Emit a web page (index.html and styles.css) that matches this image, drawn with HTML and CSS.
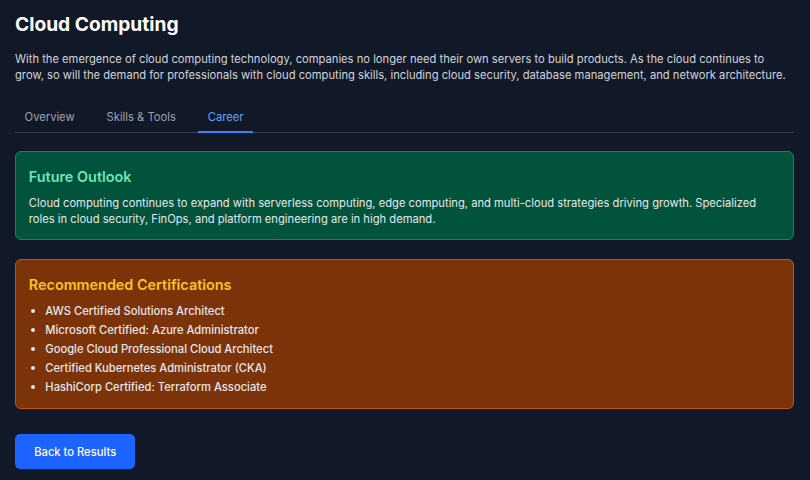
FILE: index.html
```html
<!DOCTYPE html>
<html>
<head>
<meta charset="utf-8">
<link rel="stylesheet" href="styles.css">
</head>
<body>
<div class="page">
  <h1 class="title">Cloud Computing</h1>
  <p class="desc">With the emergence of cloud computing technology, companies no longer need their own servers to build products. As the cloud continues to grow, so will the demand for professionals with cloud computing skills, including cloud security, database management, and network architecture.</p>
  <div class="tabs">
    <div class="tab">Overview</div>
    <div class="tab">Skills &amp; Tools</div>
    <div class="tab active">Career</div>
  </div>
  <div class="card card-green">
    <h2 class="card-title green">Future Outlook</h2>
    <p class="card-text">Cloud computing continues to expand with serverless computing, edge computing, and multi-cloud strategies driving growth. Specialized roles in cloud security, FinOps, and platform engineering are in high demand.</p>
  </div>
  <div class="card card-orange">
    <h2 class="card-title amber">Recommended Certifications</h2>
    <ul class="cert-list">
      <li>AWS Certified Solutions Architect</li>
      <li>Microsoft Certified: Azure Administrator</li>
      <li>Google Cloud Professional Cloud Architect</li>
      <li>Certified Kubernetes Administrator (CKA)</li>
      <li>HashiCorp Certified: Terraform Associate</li>
    </ul>
  </div>
  <button class="btn">Back to Results</button>
</div>
</body>
</html>
```
FILE: styles.css
```css
* { box-sizing: border-box; }
html, body { margin: 0; padding: 0; background: #111827; }
body {
  font-family: Inter, "Noto Sans", sans-serif;
  color: #d1d5db;
}
.page {
  padding: 12.2px 16px 16px 15px;
  display: flex;
  flex-direction: column;
}
.title {
  margin: 0;
  font-size: 19.2px;
  font-weight: 700;
  color: #ffffff;
  line-height: 25.6px;
}
.desc {
  margin: 13px 0 0;
  font-size: 11.2px;
  line-height: 16px;
  color: #d1d5db;
}
.tabs {
  display: flex;
  gap: 12.8px;
  margin-top: 19.2px;
  border-bottom: 1px solid #374151;
}
.tab {
  padding: 7.4px 9.6px 5.4px;
  font-size: 11.2px;
  line-height: 16px;
  color: #9ca3af;
  border-bottom: 2px solid transparent;
  margin-bottom: -1px;
}
.tab.active {
  color: #60a5fa;
  border-bottom-color: #3b82f6;
}
.card {
  border-radius: 6px;
  padding: 14px 12.8px 12.4px;
}
.card-green {
  margin-top: 18.2px;
  background: #02533b;
  border: 1px solid #0b8a5f;
}
.card-orange {
  margin-top: 18.6px;
  background: #7c330a;
  border: 1px solid #c2550c;
}
.card-title {
  margin: 0 0 6.4px;
  font-size: 14.4px;
  font-weight: 600;
  line-height: 22.4px;
}
.green { color: #6ee7b7; }
.amber { color: #fcc41c; }
.card-text {
  margin: 0;
  font-size: 11.2px;
  line-height: 16px;
  color: #e5e7eb;
}
.cert-list {
  margin: 0;
  padding: 0;
  list-style: none;
  display: flex;
  flex-direction: column;
  gap: 3.2px;
  font-size: 11.2px;
  line-height: 16px;
  font-weight: 500;
  color: #e5e7eb;
}
.cert-list li {
  display: flex;
  align-items: center;
}
.cert-list li::before {
  content: "";
  width: 4px;
  height: 4px;
  border-radius: 50%;
  background: #e5e7eb;
  margin: 0 10.5px 0 2px;
  flex: none;
}
.btn {
  margin-top: 25.6px;
  align-self: flex-start;
  height: 35.2px;
  padding: 0 19.2px;
  border: none;
  border-radius: 5px;
  background: #1d63ff;
  color: #ffffff;
  font-family: Inter, "Noto Sans", sans-serif;
  font-size: 11.2px;
  font-weight: 500;
}
```
